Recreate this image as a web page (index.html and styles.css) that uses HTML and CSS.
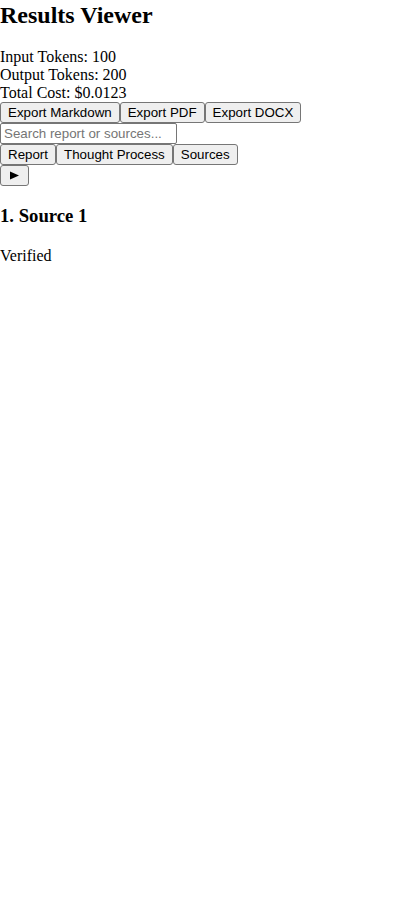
FILE: index.html
```html
<!DOCTYPE html>
<html>
<head>
<meta charset="utf-8">
<title>Results Viewer</title>
<link rel="stylesheet" href="styles.css">
</head>
<body>
<div class="viewer">
  <h1 class="title">Results Viewer</h1>
  <div class="stats">
    <div>Input Tokens: 100</div>
    <div>Output Tokens: 200</div>
    <div>Total Cost: $0.0123</div>
  </div>
  <div class="row">
    <button class="btn">Export Markdown</button><button class="btn">Export PDF</button><button class="btn">Export DOCX</button>
  </div>
  <div class="row">
    <input class="search" type="text" placeholder="Search report or sources...">
  </div>
  <div class="row">
    <button class="btn">Report</button><button class="btn">Thought Process</button><button class="btn">Sources</button>
  </div>
  <div class="row">
    <button class="btn toggle" aria-label="Expand"><svg class="tri" width="9" height="9" viewBox="0 0 9 9"><polygon points="0,0.5 9,4.5 0,8.5" fill="#000"/></svg></button>
  </div>
  <h3 class="source-title">1. Source 1</h3>
  <p class="status">Verified</p>
</div>
</body>
</html>
```
FILE: styles.css
```css
html, body {
  margin: 0;
  padding: 0;
  background: #fff;
}
body {
  font-family: "Liberation Serif", "Times New Roman", serif;
  font-size: 16px;
  color: #000;
}
.title {
  font-size: 24px;
  font-weight: bold;
  margin: 0 0 19px;
  padding-top: 2px;
}
.row {
  display: flex;
}
.btn {
  font-family: "Liberation Sans", Arial, sans-serif;
  font-size: 13.333px;
  line-height: 15px;
  color: #000;
  background: #efefef;
  border: 1px solid #767676;
  border-radius: 3px;
  padding: 2px 7px;
  margin: 0;
}
.toggle {
  display: flex;
  align-items: center;
  height: 21px;
  padding: 2px 9px;
}
.tri {
  display: block;
}
.search {
  font-family: "Liberation Sans", Arial, sans-serif;
  font-size: 13.333px;
  line-height: 15px;
  width: 177px;
  box-sizing: border-box;
  border: 1px solid #767676;
  border-radius: 2px;
  padding: 2px 3px;
  margin: 0;
}
.search::placeholder {
  color: #757575;
}
.source-title {
  font-size: 18.72px;
  margin: 18.72px 0;
}
.status {
  margin: 20px 0 16px;
}
```
